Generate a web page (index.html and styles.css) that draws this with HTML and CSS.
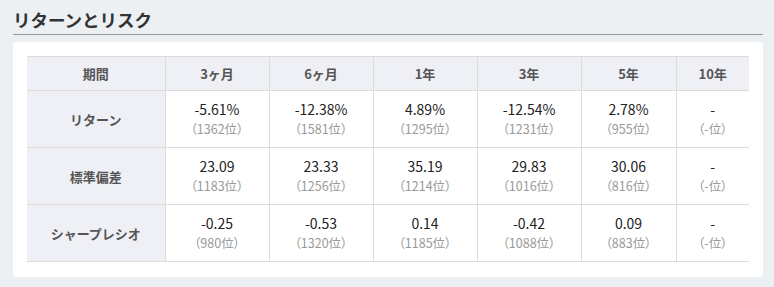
FILE: index.html
```html
<!DOCTYPE html>
<html lang="ja">
<head>
<meta charset="utf-8">
<title>リターンとリスク</title>
<link rel="stylesheet" href="styles.css">
</head>
<body>
<section class="section">
  <h2 class="title">リターンとリスク</h2>
  <div class="card">
    <table class="risk">
      <colgroup>
        <col class="c-head"><col class="c-mid"><col class="c-mid"><col class="c-mid"><col class="c-mid"><col class="c-5y"><col class="c-10y">
      </colgroup>
      <thead>
        <tr><th>期間</th><th>3ヶ月</th><th>6ヶ月</th><th>1年</th><th>3年</th><th>5年</th><th>10年</th></tr>
      </thead>
      <tbody>
        <tr>
          <th>リターン</th>
          <td><span class="v">-5.61%</span><span class="r">（1362位）</span></td>
          <td><span class="v">-12.38%</span><span class="r">（1581位）</span></td>
          <td><span class="v">4.89%</span><span class="r">（1295位）</span></td>
          <td><span class="v">-12.54%</span><span class="r">（1231位）</span></td>
          <td><span class="v">2.78%</span><span class="r">（955位）</span></td>
          <td><span class="v">-</span><span class="r">（-位）</span></td>
        </tr>
        <tr>
          <th>標準偏差</th>
          <td><span class="v">23.09</span><span class="r">（1183位）</span></td>
          <td><span class="v">23.33</span><span class="r">（1256位）</span></td>
          <td><span class="v">35.19</span><span class="r">（1214位）</span></td>
          <td><span class="v">29.83</span><span class="r">（1016位）</span></td>
          <td><span class="v">30.06</span><span class="r">（816位）</span></td>
          <td><span class="v">-</span><span class="r">（-位）</span></td>
        </tr>
        <tr>
          <th>シャープレシオ</th>
          <td><span class="v">-0.25</span><span class="r">（980位）</span></td>
          <td><span class="v">-0.53</span><span class="r">（1320位）</span></td>
          <td><span class="v">0.14</span><span class="r">（1185位）</span></td>
          <td><span class="v">-0.42</span><span class="r">（1088位）</span></td>
          <td><span class="v">0.09</span><span class="r">（883位）</span></td>
          <td><span class="v">-</span><span class="r">（-位）</span></td>
        </tr>
      </tbody>
    </table>
  </div>
</section>
</body>
</html>
```

FILE: styles.css
```css
html, body {
  margin: 0;
  padding: 0;
  background: #edf0f3;
}
body {
  font-family: "Noto Sans CJK JP", "Noto Sans", sans-serif;
  color: #333;
}
.section {
  padding: 7px 11px 0 13px;
}
.title {
  margin: 0;
  font-size: 17.5px;
  line-height: 26px;
  font-weight: 700;
  color: #333;
  padding-bottom: 1px;
  border-bottom: 1px solid #999;
}
.card {
  margin-top: 7px;
  background: #fff;
  border-radius: 4px;
  padding: 14px 14px 15px 14px;
}
.risk {
  width: 722px;
  table-layout: fixed;
  border-collapse: collapse;
}
.c-head { width: 138px; }
.c-mid { width: 104px; }
.c-5y { width: 95px; }
.c-10y { width: 73px; }
.risk th, .risk td {
  border-top: 1px solid #dcdcdc;
  border-bottom: 1px solid #dcdcdc;
  border-left: 1px solid #dcdcdc;
  text-align: center;
  padding: 0;
}
.risk tr > :first-child { border-left: none; }
.risk th {
  background: #eff0f5;
  font-size: 13px;
  font-weight: 700;
  color: #555;
}
.risk thead th {
  height: 33px;
}
.risk tbody th, .risk tbody td {
  height: 56px;
}
.risk td {
  background: #fff;
}
.v {
  display: block;
  font-size: 14px;
  line-height: 20px;
  color: #222;
}
.r {
  display: block;
  font-size: 12.5px;
  line-height: 20px;
  color: #999;
  font-feature-settings: "palt";
}
```
